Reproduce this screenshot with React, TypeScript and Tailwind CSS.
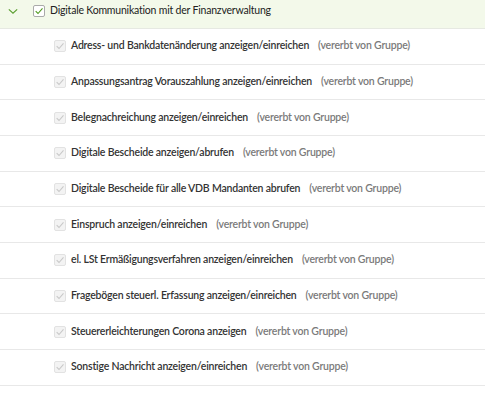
const items = [
  "Adress- und Bankdatenänderung anzeigen/einreichen",
  "Anpassungsantrag Vorauszahlung anzeigen/einreichen",
  "Belegnachreichung anzeigen/einreichen",
  "Digitale Bescheide anzeigen/abrufen",
  "Digitale Bescheide für alle VDB Mandanten abrufen",
  "Einspruch anzeigen/einreichen",
  "el. LSt Ermäßigungsverfahren anzeigen/einreichen",
  "Fragebögen steuerl. Erfassung anzeigen/einreichen",
  "Steuererleichterungen Corona anzeigen",
  "Sonstige Nachricht anzeigen/einreichen",
];

function Check({ color }: { color: string }) {
  return (
    <svg viewBox="0 0 12 12" className="h-[10px] w-[10px]">
      <path d="M2 6.2 L4.8 9 L10.2 2.8" fill="none" stroke={color} strokeWidth="1.3" />
    </svg>
  );
}

export default function App() {
  return (
    <div className="w-[485px] h-[393px] overflow-hidden bg-white text-[10.5px] tracking-[-0.2px] text-[#333] whitespace-nowrap" style={{ fontFamily: 'Lato, "Open Sans", sans-serif' }}>
      <div className="flex h-[29px] items-center border-b border-[#e6e9e2] bg-[#f3f9ea] pb-[6px]">
        <svg viewBox="0 0 12 8" className="ml-[8px] h-[7px] w-[10px]">
          <path d="M1 1.5 L6 6 L11 1.5" fill="none" stroke="#5a9e2f" strokeWidth="1.4" />
        </svg>
        <div className="ml-[15px] flex h-[12px] w-[12px] items-center justify-center rounded-[2px] border border-[#aaa] bg-white">
          <Check color="#4e9a1e" />
        </div>
        <span className="ml-[5px] text-[#222]">Digitale Kommunikation mit der Finanzverwaltung</span>
      </div>
      {items.map((t) => (
        <div key={t} className="flex h-[35.67px] items-center border-b border-[#e8e8e8]">
          <div className="ml-[54px] flex h-[12px] w-[12px] shrink-0 items-center justify-center rounded-[2px] border border-[#e2e2e2] bg-[#f3f3f3]">
            <Check color="#c8c8c8" />
          </div>
          <span className="ml-[5px] font-semibold">{t}</span>
          <span className="ml-[9px] font-semibold text-[#7a7a7a]">(vererbt von Gruppe)</span>
        </div>
      ))}
    </div>
  );
}
